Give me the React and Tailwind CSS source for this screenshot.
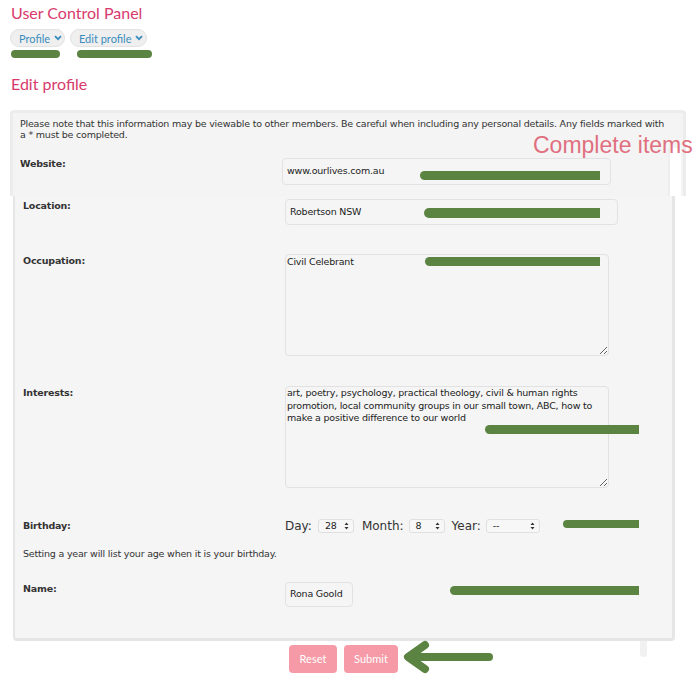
import React from "react";

const V = "font-['DejaVu_Sans',sans-serif] tracking-[-0.2px]";
const L = "font-['Lato',sans-serif]";

function Pill({ label, w }) {
  return (
    <div
      className={`flex items-center whitespace-nowrap h-[18px] rounded-full border border-[#e2e2e2] bg-[#efefef] pl-[8px] pr-[6px] text-[11px] text-[#3b8dbd] ${L}`}
      style={{ width: w }}
    >
      <span className="leading-none">{label}</span>
      <svg width="8" height="6" viewBox="0 0 8 6" className="ml-[4px] shrink-0">
        <path d="M1 1.2 L4 4.2 L7 1.2" fill="none" stroke="#3b8dbd" strokeWidth="1.9" />
      </svg>
    </div>
  );
}

function FakeSelect({ value, w }) {
  return (
    <div
      className={`flex items-center justify-between h-[14px] rounded-[3px] border border-[#e0e0e0] bg-[#f7f7f7] pl-[6px] pr-[4px] text-[9.5px] text-[#222] ${V}`}
      style={{ width: w }}
    >
      <span className="leading-none">{value}</span>
      <svg width="5" height="8" viewBox="0 0 5 8">
        <path d="M0.5 3 L2.5 0.6 L4.5 3 Z M0.5 5 L2.5 7.4 L4.5 5 Z" fill="#333" />
      </svg>
    </div>
  );
}

function Bar({ x, y, w, h = 9 }) {
  return (
    <div
      className="absolute bg-[#5b8442] rounded-l-full rounded-r-[2px]"
      style={{ left: x, top: y, width: w, height: h }}
    />
  );
}

const LABEL = `w-[262px] shrink-0 text-[9.5px] leading-[12px] font-bold text-[#333] ${V}`;

export default function App() {
  return (
    <div className="relative w-[700px] h-[693px] overflow-hidden bg-white">
      {/* header */}
      <div className="pl-[11px] pt-[3px]">
        <h1 className={`text-[16px] leading-[19px] text-[#d83a6c] ${L}`}>User Control Panel</h1>
      </div>
      <div className="flex gap-[5px] pl-[10px] mt-[7px]">
        <Pill label="Profile" w={55} />
        <Pill label="Edit profile" w={77} />
      </div>
      <div className="flex pl-[11px] mt-[3px]">
        <div className="h-[8px] w-[49px] rounded-full bg-[#5b8442]" />
        <div className="h-[8px] w-[75px] rounded-full bg-[#5b8442] ml-[17px]" />
      </div>
      <h2 className={`pl-[11px] mt-[16px] text-[16px] leading-[19px] text-[#d83a6c] ${L}`}>Edit profile</h2>

      {/* top panel */}
      <div className="mt-[17px] ml-[10px] w-[676px] h-[86px] border-[3px] border-b-0 border-[#ececec] rounded-t-[4px] bg-[#f4f4f4] pl-[7px] pt-[5px]">
        <p className={`text-[9.5px] leading-[11px] text-[#333] w-[650px] ${V}`}>
          Please note that this information may be viewable to other members. Be careful when including any personal details. Any fields marked with a * must be completed.
        </p>
        <div className="flex mt-[18px]">
          <div className={LABEL}>Website:</div>
          <div className={`w-[329px] h-[27px] rounded-[4px] border border-[#e2e2e2] bg-[#f5f5f5] pl-[4px] flex items-center text-[9.5px] text-[#222] ${V}`}>
            www.ourlives.com.au
          </div>
        </div>
      </div>

      {/* lower panel */}
      <div className="ml-[13px] w-[662px] h-[445px] border-l-2 border-r-[3px] border-b-[3px] border-[#e6e6e6] rounded-b-[4px] bg-[#f5f5f5] pl-[8px]">
        <div className="flex pt-[3px]">
          <div className={`${LABEL} pt-[1px]`}>Location:</div>
          <div className={`w-[333px] h-[26px] rounded-[4px] border border-[#e2e2e2] bg-[#f5f5f5] pl-[4px] flex items-center text-[9.5px] text-[#222] ${V}`}>
            Robertson NSW
          </div>
        </div>
        <div className="flex mt-[29px]">
          <div className={`${LABEL} pt-[1px]`}>Occupation:</div>
          <textarea
            readOnly
            defaultValue="Civil Celebrant"
            className={`w-[324px] h-[102px] rounded-[4px] border border-[#e2e2e2] bg-[#f5f5f5] px-[1px] pt-0 text-[9.5px] leading-[13px] text-[#222] outline-none ${V}`}
          />
        </div>
        <div className="flex mt-[30px]">
          <div className={`${LABEL} pt-[1px]`}>Interests:</div>
          <textarea
            readOnly
            defaultValue="art, poetry, psychology, practical theology, civil & human rights promotion, local community groups in our small town, ABC, how to make a positive difference to our world"
            className={`w-[324px] h-[102px] rounded-[4px] border border-[#e2e2e2] bg-[#f5f5f5] px-[1px] pt-0 text-[9.5px] leading-[12.5px] text-[#222] outline-none ${V}`}
          />
        </div>
        <div className="flex items-center mt-[31px] h-[14px]">
          <div className={LABEL}>Birthday:</div>
          <div className={`flex items-center text-[12px] leading-[14px] text-[#333] font-['DejaVu_Sans',sans-serif]`}>
            <span>Day:</span>
            <div className="ml-[6px]"><FakeSelect value="28" w={36} /></div>
            <span className="ml-[8px]">Month:</span>
            <div className="ml-[5px]"><FakeSelect value="8" w={36} /></div>
            <span className="ml-[7px]">Year:</span>
            <div className="ml-[5px]"><FakeSelect value="--" w={54} /></div>
          </div>
        </div>
        <p className={`mt-[15px] text-[9.5px] leading-[12px] text-[#333] ${V}`}>
          Setting a year will list your age when it is your birthday.
        </p>
        <div className="flex mt-[22px]">
          <div className={`${LABEL} pt-[1px]`}>Name:</div>
          <div className={`w-[68px] h-[25px] rounded-[4px] border border-[#e2e2e2] bg-[#f5f5f5] pl-[4px] flex items-center text-[9.5px] text-[#222] ${V}`}>
            Rona Goold
          </div>
        </div>
      </div>

      {/* buttons */}
      <div className={`flex gap-[7px] pl-[289px] mt-[4px] ${L}`}>
        <div className="w-[48px] h-[28px] rounded-[4px] bg-[#f59aa6] text-white text-[11px] flex items-center justify-center">Reset</div>
        <div className="w-[54px] h-[28px] rounded-[4px] bg-[#f59aa6] text-white text-[11px] flex items-center justify-center">Submit</div>
      </div>

      {/* overlay annotations */}
      <div className="absolute left-[668px] top-[148px] w-[13px] h-[48px] bg-white border-l-2 border-[#eeeeee]" />
      <div className="absolute left-[640px] top-[641px] w-[7px] h-[16px] rounded-b-full bg-[#f1f1f1]" />
      <div className="absolute left-[533px] top-[134px] text-[23px] leading-none text-[#e06f80] font-['Liberation_Sans',sans-serif]">
        Complete items
      </div>
      <Bar x={420} y={171} w={180} />
      <Bar x={424} y={208} w={176} h={10} />
      <Bar x={425} y={257} w={175} />
      <Bar x={485} y={425} w={154} />
      <Bar x={563} y={520} w={76} h={8} />
      <Bar x={450} y={586} w={189} />
      <svg className="absolute left-[400px] top-[638px]" width="100" height="40" viewBox="0 0 100 40">
        <path d="M89 19 H14" stroke="#5b8442" strokeWidth="8" strokeLinecap="round" fill="none" />
        <path d="M25 7 L8 19 L25 31" stroke="#5b8442" strokeWidth="8" strokeLinecap="round" strokeLinejoin="round" fill="none" />
      </svg>
    </div>
  );
}
